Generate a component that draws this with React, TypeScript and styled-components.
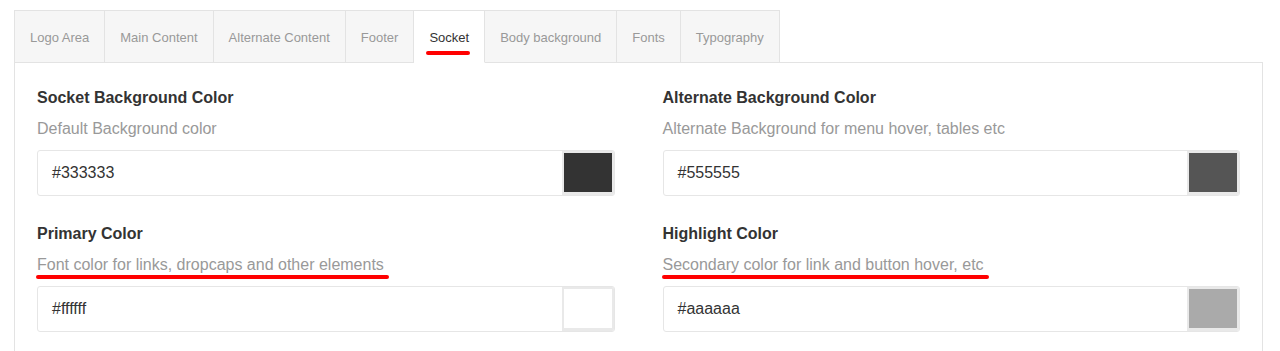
import React from "react";
import styled, { createGlobalStyle } from "styled-components";

const GlobalStyle = createGlobalStyle`
  html, body {
    margin: 0;
    padding: 0;
    background: #ffffff;
  }
  body {
    font-family: "Liberation Sans", Arial, sans-serif;
    color: #333333;
  }
`;

const Page = styled.div`
  padding: 10px 17px 0 14px;
  height: 351px;
  box-sizing: border-box;
  overflow: hidden;
`;

const TabBar = styled.div`
  display: flex;
  position: relative;
  z-index: 1;
`;

const Tab = styled.div<{ $active?: boolean }>`
  position: relative;
  height: 53px;
  box-sizing: border-box;
  padding: 2px 15px 0 15px;
  display: flex;
  align-items: center;
  font-size: 13px;
  color: ${(p) => (p.$active ? "#333333" : "#999999")};
  background: ${(p) => (p.$active ? "#ffffff" : "#f6f6f6")};
  border: 1px solid #e3e3e3;
  border-bottom: ${(p) => (p.$active ? "1px solid #ffffff" : "1px solid #e3e3e3")};
  margin-bottom: -1px;
  & + & {
    border-left: none;
  }
`;

const TabLabel = styled.span<{ $active?: boolean }>`
  position: relative;
  &::after {
    content: "";
    display: ${(p) => (p.$active ? "block" : "none")};
    position: absolute;
    left: -3px;
    right: -1px;
    top: 21px;
    height: 4px;
    border-radius: 2px;
    background: #ff0000;
  }
`;

const Panel = styled.div`
  border: 1px solid #e3e3e3;
  border-bottom: none;
  padding: 25px 22px 0 22px;
  height: 300px;
  box-sizing: border-box;
`;

const Grid = styled.div`
  display: grid;
  grid-template-columns: 1fr 1fr;
  column-gap: 48px;
  row-gap: 28px;
`;

const Field = styled.div`
  display: flex;
  flex-direction: column;
`;

const Title = styled.div`
  font-size: 16px;
  line-height: 20px;
  font-weight: 700;
  color: #333333;
  margin-bottom: 11px;
`;

const Description = styled.div`
  font-size: 16px;
  line-height: 20px;
  color: #999999;
  margin-bottom: 11px;
`;

const Marked = styled.span<{ $marked?: boolean }>`
  position: relative;
  &::after {
    content: "";
    display: ${(p) => (p.$marked ? "block" : "none")};
    position: absolute;
    left: -1px;
    right: -5px;
    top: 19px;
    height: 4px;
    border-radius: 2px;
    background: #ff0000;
  }
`;

const InputBox = styled.div`
  display: flex;
  align-items: stretch;
  height: 46px;
  box-sizing: border-box;
  border: 1px solid #e6e6e6;
  border-radius: 3px;
  background: #ffffff;
  overflow: hidden;
`;

const HexValue = styled.div`
  flex: 1;
  display: flex;
  align-items: center;
  padding-left: 14px;
  font-size: 16px;
  color: #333333;
`;

const Swatch = styled.div`
  width: 52px;
  box-sizing: border-box;
  padding: 2px 2px 3px 2px;
  background: #e9e9e9;
`;

const SwatchFill = styled.div<{ $color: string }>`
  width: 100%;
  height: 100%;
  background: ${(p) => p.$color};
`;

const tabs = [
  "Logo Area",
  "Main Content",
  "Alternate Content",
  "Footer",
  "Socket",
  "Body background",
  "Fonts",
  "Typography",
];

const fields = [
  {
    title: "Socket Background Color",
    desc: "Default Background color",
    value: "#333333",
    marked: false,
  },
  {
    title: "Alternate Background Color",
    desc: "Alternate Background for menu hover, tables etc",
    value: "#555555",
    marked: false,
  },
  {
    title: "Primary Color",
    desc: "Font color for links, dropcaps and other elements",
    value: "#ffffff",
    marked: true,
  },
  {
    title: "Highlight Color",
    desc: "Secondary color for link and button hover, etc",
    value: "#aaaaaa",
    marked: true,
  },
];

export default function App() {
  return (
    <>
      <GlobalStyle />
      <Page>
        <TabBar>
          {tabs.map((t) => (
            <Tab key={t} $active={t === "Socket"}>
              <TabLabel $active={t === "Socket"}>{t}</TabLabel>
            </Tab>
          ))}
        </TabBar>
        <Panel>
          <Grid>
            {fields.map((f) => (
              <Field key={f.title}>
                <Title>{f.title}</Title>
                <Description>
                  <Marked $marked={f.marked}>{f.desc}</Marked>
                </Description>
                <InputBox>
                  <HexValue>{f.value}</HexValue>
                  <Swatch>
                    <SwatchFill $color={f.value} />
                  </Swatch>
                </InputBox>
              </Field>
            ))}
          </Grid>
        </Panel>
      </Page>
    </>
  );
}
